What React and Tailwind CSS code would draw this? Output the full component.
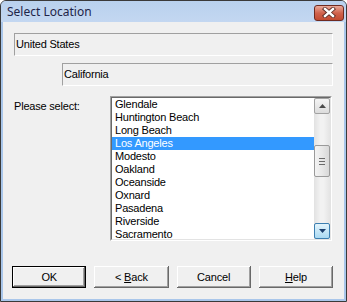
import React from 'react';

const cities = [
  'Glendale',
  'Huntington Beach',
  'Long Beach',
  'Los Angeles',
  'Modesto',
  'Oakland',
  'Oceanside',
  'Oxnard',
  'Pasadena',
  'Riverside',
  'Sacramento',
];

function DlgButton({ children, isDefault }) {
  return (
    <div className={`w-[75px] h-[22px] ${isDefault ? 'border border-black' : ''}`}>
      <button
        className={`w-full h-full flex items-center justify-center bg-[#f0f0f0] text-black ${
          isDefault
            ? 'shadow-[inset_-1px_-1px_0_#696969,inset_1px_1px_0_#fff,inset_-2px_-2px_0_#a0a0a0]'
            : 'shadow-[inset_-1px_-1px_0_#696969,inset_1px_1px_0_#fff,inset_-2px_-2px_0_#a0a0a0]'
        }`}
      >
        {children}
      </button>
    </div>
  );
}

function Triangle({ up, color }) {
  return (
    <svg width="7" height="4" viewBox="0 0 7 4">
      <path d={up ? 'M0 4 L3.5 0 L7 4 Z' : 'M0 0 L7 0 L3.5 4 Z'} fill={color} />
    </svg>
  );
}

export default function App() {
  return (
    <div
      className="w-[347px] h-[302px] flex flex-col border border-[#3a3a3a] rounded-t-[6px] bg-[#a9c6ea] overflow-hidden text-[11px] tracking-[-0.2px] text-black"
      style={{ fontFamily: '"Liberation Sans", Arial, sans-serif' }}
    >
      {/* Title bar */}
      <div className="h-[21px] shrink-0 flex items-center justify-between pl-[6px] pr-[2px] bg-gradient-to-b from-[#b9d1ee] to-[#c3d7f1]">
        <span
          className="text-[12px] tracking-normal text-[#1e2448]"
          style={{ fontFamily: '"Noto Sans", "Open Sans", sans-serif' }}
        >
          Select Location
        </span>
        <div className="w-[30px] h-[16px] mt-[2px] rounded-[3px] border border-[#6e2a20] bg-gradient-to-b from-[#e9a99a] via-[#d0634d] to-[#c24a30] flex items-center justify-center">
          <svg width="14" height="11" viewBox="0 0 14 11">
            <path d="M3 2 L11 9 M11 2 L3 9" stroke="#5a2b24" strokeWidth="4.2" strokeLinecap="square" />
            <path d="M3 2 L11 9 M11 2 L3 9" stroke="#ffffff" strokeWidth="2.4" strokeLinecap="square" />
          </svg>
        </div>
      </div>

      {/* Client area */}
      <div className="flex-1 mx-[2px] mb-[2px] bg-[#f0f0f0] flex flex-col pt-[11px] px-[11px]">
        <div className="h-[23px] border border-t-[#a0a0a0] border-l-[#a0a0a0] border-b-white border-r-white flex items-center pl-[1px]">
          United States
        </div>
        <div className="h-[23px] mt-[7px] ml-[48px] border border-t-[#a0a0a0] border-l-[#a0a0a0] border-b-white border-r-white flex items-center pl-[1px]">
          California
        </div>

        <div className="mt-[10px] flex">
          <div className="w-[96px] pt-[2px]">Please select:</div>
          <div className="w-[222px] h-[145px] border border-t-[#a0a0a0] border-l-[#a0a0a0] border-b-white border-r-white">
            <div className="w-full h-full flex border border-t-[#696969] border-l-[#696969] border-b-[#e3e3e3] border-r-[#e3e3e3] bg-white">
              <div className="flex-1 flex flex-col">
                {cities.map((c) => (
                  <div
                    key={c}
                    className={`h-[13px] leading-[13px] pl-[3px] ${
                      c === 'Los Angeles' ? 'bg-[#3399ff] text-white' : ''
                    }`}
                  >
                    {c}
                  </div>
                ))}
              </div>
              {/* Scrollbar */}
              <div className="w-[16px] flex flex-col bg-[linear-gradient(to_right,#e2e2e2,#f2f2f2_40%,#f2f2f2_60%,#e4e4e4)]">
                <div className="h-[16px] rounded-[2px] border border-[#a2a2a2] bg-gradient-to-b from-[#f4f4f4] to-[#dcdcdc] flex items-center justify-center">
                  <Triangle up color="#4a4a4a" />
                </div>
                <div className="h-[31px]" />
                <div className="h-[32px] rounded-[2px] border border-[#9a9a9a] bg-[linear-gradient(to_right,#f3f3f3,#e8e8e8_50%,#d8d8d8)] flex flex-col items-center justify-center gap-[2px]">
                  <div className="w-[6px] h-[1px] bg-[#6a6a6a]" />
                  <div className="w-[6px] h-[1px] bg-[#6a6a6a]" />
                  <div className="w-[6px] h-[1px] bg-[#6a6a6a]" />
                </div>
                <div className="flex-1" />
                <div className="h-[16px] rounded-[2px] border border-[#3c7fb1] bg-gradient-to-b from-[#e3f4fc] to-[#a9d9f2] flex items-center justify-center">
                  <Triangle color="#1c3f6e" />
                </div>
              </div>
            </div>
          </div>
        </div>

        <div className="mt-[25px] flex gap-[8px] -ml-[2px]">
          <DlgButton isDefault>OK</DlgButton>
          <DlgButton>
            <span>
              &lt; <u>B</u>ack
            </span>
          </DlgButton>
          <DlgButton>Cancel</DlgButton>
          <DlgButton>
            <span>
              <u>H</u>elp
            </span>
          </DlgButton>
        </div>
      </div>
    </div>
  );
}
